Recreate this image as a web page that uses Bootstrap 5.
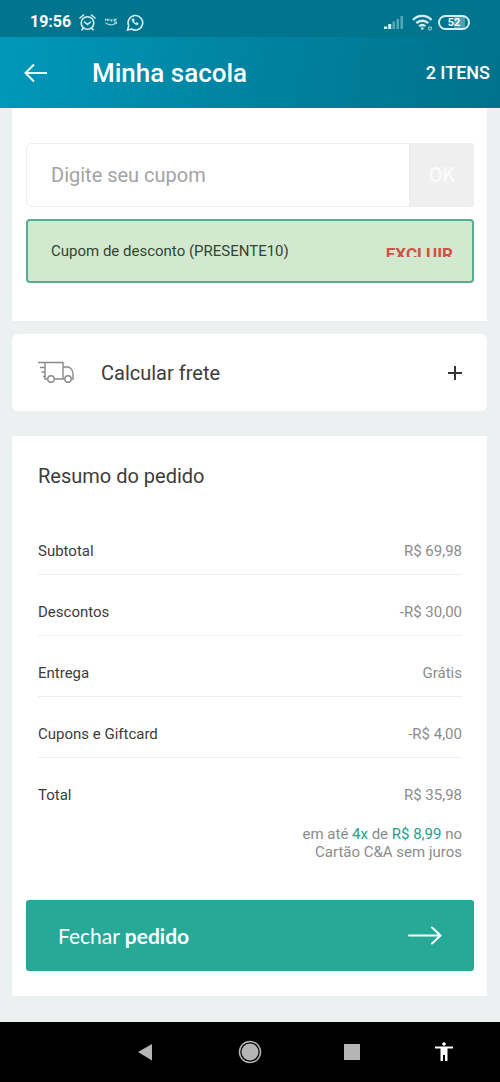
<!DOCTYPE html>
<html lang="pt-BR">
<head>
<meta charset="utf-8">
<meta name="viewport" content="width=device-width, initial-scale=1">
<title>Minha sacola</title>
<link href="https://cdn.jsdelivr.net/npm/bootstrap@5.3.0/dist/css/bootstrap.min.css" rel="stylesheet">
<style>
  body { font-family: Roboto, "Liberation Sans", sans-serif; background: #ecf0f1; color: #3c3c3c; font-size: 15px; line-height: 20px; }
  svg { display: block; flex: none; }
  .status-bar { height: 37px; background: #02758e; padding: 8px 30px 0; font-size: 16px; }
  .status-icons { gap: 8px; margin-left: 8px; }
  .battery-level { font-size: 11px; line-height: 11px; border: 2px solid #d3f0f6; border-radius: 8px; width: 32px; background: linear-gradient(90deg, transparent 50%, #4f9fb0 50% 90%, transparent 90%); }
  .app-bar { height: 71px; background: linear-gradient(100deg, #0098ba 0%, #0083a0 50%, #00728c 100%); padding: 0 10px 0 24px; }
  .app-title { font-size: 26px; line-height: 32px; margin-left: 44px; }
  .app-count { font-size: 18px; }
  .page-body { padding: 0 13px 26px 12px; }
  .coupon-panel { padding: 35px 13px 38px 14px; }
  .coupon-field { height: 64px; border: 1px solid #ececec; border-radius: 6px 0 0 6px; padding: 0 24px; font-size: 20px; }
  .coupon-field::placeholder { color: #a3a3a3; opacity: 1; }
  .coupon-ok, .coupon-ok:disabled { width: 64px; padding: 0; border: 0; border-radius: 0 2px 2px 0; background: #efefef; color: #fbfbfb; opacity: 1; font-size: 20px; }
  .coupon-applied { min-height: 64px; margin-top: 12px; padding: 0 19px 0 23px; border: 2px solid #55ae90; border-radius: 4px; background: #d2e9cf; color: #34452f; }
  .coupon-remove { height: 12px; overflow: hidden; color: #d25048; font-size: 17px; line-height: 18px; }
  .shipping { min-height: 77px; margin-top: 13px; padding: 0 25px 0 26px; border-radius: 6px; font-size: 20px; line-height: 28px; color: #3c3c3c; }
  .shipping-label { margin-left: 26px; }
  .summary { margin-top: 25px; padding: 26px 13px 25px 14px; }
  .summary-inner { padding: 0 12px; }
  .summary-title { font-size: 20px; line-height: 28px; margin-bottom: 24px; }
  .summary-lines th, .summary-lines td { padding: 27px 0 13px; font-weight: 400; border-bottom: 1px solid #eeeeee; }
  .summary-lines tr:last-child > * { border-bottom: 0; }
  .summary-lines td, .installments { color: #8c8c8c; }
  .installments { line-height: 18px; margin: 7px 0 39px; }
  .accent { color: #26a08a; }
  .checkout, .checkout:hover { min-height: 71px; padding: 0 32px; border: 0; border-radius: 3px; background: #26a997; color: #fff; font-family: Lato, Roboto, sans-serif; font-size: 21px; }
  .system-nav { height: 60px; background: #000; padding: 0 47px 0 134px; }
  .system-keys { gap: 82px; }
  .system-nav button { background: none; border: 0; padding: 0; }
</style>
</head>
<body>
<div class="status-bar d-flex align-items-start text-white">
  <span class="fw-bold mt-1 lh-sm">19:56</span>
  <div class="status-icons d-flex align-items-center mt-1">
    <svg width="17" height="20" viewBox="0 0 17 20" fill="none" stroke="#d3f0f6" stroke-width="1.600" stroke-linecap="round"><circle cx="8.500" cy="11" r="6.300"/><path d="M1 6L4.500 3M16 6l-3.500-3M5.500 10l3 2.500 3-2.500M4 16.500l-1 1.300M13 16.500l1 1.300"/></svg>
    <svg width="14" height="14" viewBox="0 0 13 14" fill="none" stroke="#9fd3de" stroke-width="1.100"><path d="M1 6V4.200h2V6M3 4.500h1.500V6M6 4.200L7 6l.8-1.800M9 4.200h2.500L9.500 6H12M1 7.800c3.500 2.600 7.500 2.600 10.500.2M10 7.500h2v1.500"/></svg>
    <svg width="18" height="20" viewBox="0 0 18 20" fill="none" stroke="#d3f0f6" stroke-width="1.600"><path d="M1.500 18l1.200-4.300A7.300 7.300 0 1 1 5.600 17z"/><path d="M6.300 7c-.8 1 .2 3 1.700 4.300s3.200 2 4 1.200l.3-1-1.800-1-1 .8C8.500 10.800 8 10 7.700 9.300l.7-.9L7.500 6.500z" fill="#d3f0f6" stroke-width=".5"/></svg>
  </div>
  <div class="ms-auto d-flex align-items-center mt-1">
    <svg width="20" height="20" viewBox="0 0 20 20" fill="#d3f0f6"><path d="M0 14.500h3.200V17H0zM4.200 12H7.200v5h-3z"/><path opacity=".4" d="M8.500 9.500h2.500V17H8.500zM12.500 7H15v10h-2.500zM16.500 4H19v13h-2.500z"/></svg>
    <svg class="ms-2" width="22" height="20" viewBox="-1 0 22 20" fill="none" stroke="#d3f0f6" stroke-width="2.400"><path d="M0 8a12.500 12.500 0 0 1 18.500 0M3.300 11.200a8.500 8.500 0 0 1 12 0M6.200 14.200a4.800 4.800 0 0 1 6.200 0"/><circle cx="9.300" cy="16.500" r="1.300" fill="#d3f0f6" stroke="none"/><circle cx="17" cy="16.500" r="1.500" stroke-width="1.300" stroke="#7cc3d2"/></svg>
    <span class="battery-level text-center fw-bold ms-1">52</span>
  </div>
</div>
<header class="app-bar d-flex align-items-center text-white">
  <a href="#" aria-label="Voltar"><svg width="24" height="20" viewBox="0 0 24 20" fill="none" stroke="#e6fbff" stroke-width="2"><path d="M23 10H1.500M10 1.500L1.500 10l8.500 8.500"/></svg></a>
  <h1 class="app-title fw-medium mb-0">Minha sacola</h1>
  <span class="app-count ms-auto fw-medium">2 ITENS</span>
</header>
<main class="page-body">
  <section class="coupon-panel bg-white">
    <form class="d-flex">
      <input class="coupon-field form-control flex-fill" type="text" placeholder="Digite seu cupom" aria-label="Digite seu cupom">
      <button class="coupon-ok btn flex-shrink-0 fw-medium" type="button" disabled>OK</button>
    </form>
    <div class="coupon-applied d-flex align-items-center justify-content-between">
      <span>Cupom de desconto (PRESENTE10)</span>
      <button class="coupon-remove btn border-0 p-0 fw-bold rounded-0" type="button">EXCLUIR</button>
    </div>
  </section>
  <button class="shipping btn bg-white border-0 w-100 d-flex align-items-center text-start" type="button">
    <svg width="37" height="24" viewBox="0 0 37 24" fill="none" stroke="#8a8a8a" stroke-width="1.400"><path d="M0 1.500h25V18M7 1.500V18h3M16 18h11M25 6h4.500c3 0 5.500 3.500 5.500 7v5h-2M2 6.500h5M3.500 11H7M5 15.500h2"/><circle cx="13" cy="18" r="3.200"/><circle cx="30" cy="18" r="3.200"/></svg>
    <span class="shipping-label">Calcular frete</span>
    <svg class="ms-auto" width="14" height="14" viewBox="0 0 14 14" stroke="#333" stroke-width="2"><path d="M0 7h14M7 0v14"/></svg>
  </button>
  <section class="summary bg-white">
    <div class="summary-inner">
      <h2 class="summary-title fw-normal">Resumo do pedido</h2>
      <table class="summary-lines w-100">
        <tbody>
          <tr><th scope="row">Subtotal</th><td class="text-end">R$ 69,98</td></tr>
          <tr><th scope="row">Descontos</th><td class="text-end">-R$ 30,00</td></tr>
          <tr><th scope="row">Entrega</th><td class="text-end">Grátis</td></tr>
          <tr><th scope="row">Cupons e Giftcard</th><td class="text-end">-R$ 4,00</td></tr>
          <tr><th scope="row">Total</th><td class="text-end">R$ 35,98</td></tr>
        </tbody>
      </table>
      <p class="installments text-end">em até <span class="accent">4x</span> de <span class="accent">R$ 8,99</span> no<br>Cartão C&amp;A sem juros</p>
    </div>
    <button class="checkout btn w-100 d-flex align-items-center justify-content-between" type="button">
      <span>Fechar <b>pedido</b></span>
      <svg width="34" height="20" viewBox="0 0 34 20" fill="none" stroke="#fff" stroke-width="2" stroke-linecap="round"><path d="M1 9.500h31M24 1.500l8.500 8-8.500 8"/></svg>
    </button>
  </section>
</main>
<nav class="system-nav d-flex align-items-center" aria-label="Sistema">
  <div class="system-keys d-flex align-items-center">
    <button type="button" aria-label="Voltar"><svg width="22" height="22" viewBox="0 0 22 22" fill="#b5b5b5"><path d="M4 11L18 3v16.500z"/></svg></button>
    <button type="button" aria-label="Início"><svg width="24" height="24" viewBox="0 0 24 24"><circle cx="12" cy="12" r="10.500" fill="none" stroke="#b5b5b5" stroke-width="1.500"/><circle cx="12" cy="12" r="8.500" fill="#b5b5b5"/></svg></button>
    <button type="button" aria-label="Recentes"><svg width="16" height="16" viewBox="0 0 16 16"><path fill="#b5b5b5" d="M0 0h16v16H0z"/></svg></button>
  </div>
  <button class="ms-auto" type="button" aria-label="Acessibilidade"><svg width="18" height="20" viewBox="0 0 18 20" fill="#fff"><circle cx="9" cy="2" r="1.800"/><path d="M0 4.500h18v2h-5.500V19H10v-6H8v6H5.500V6.500H0z"/></svg></button>
</nav>
<script src="https://cdn.jsdelivr.net/npm/bootstrap@5.3.0/dist/js/bootstrap.bundle.min.js"></script>
</body>
</html>
